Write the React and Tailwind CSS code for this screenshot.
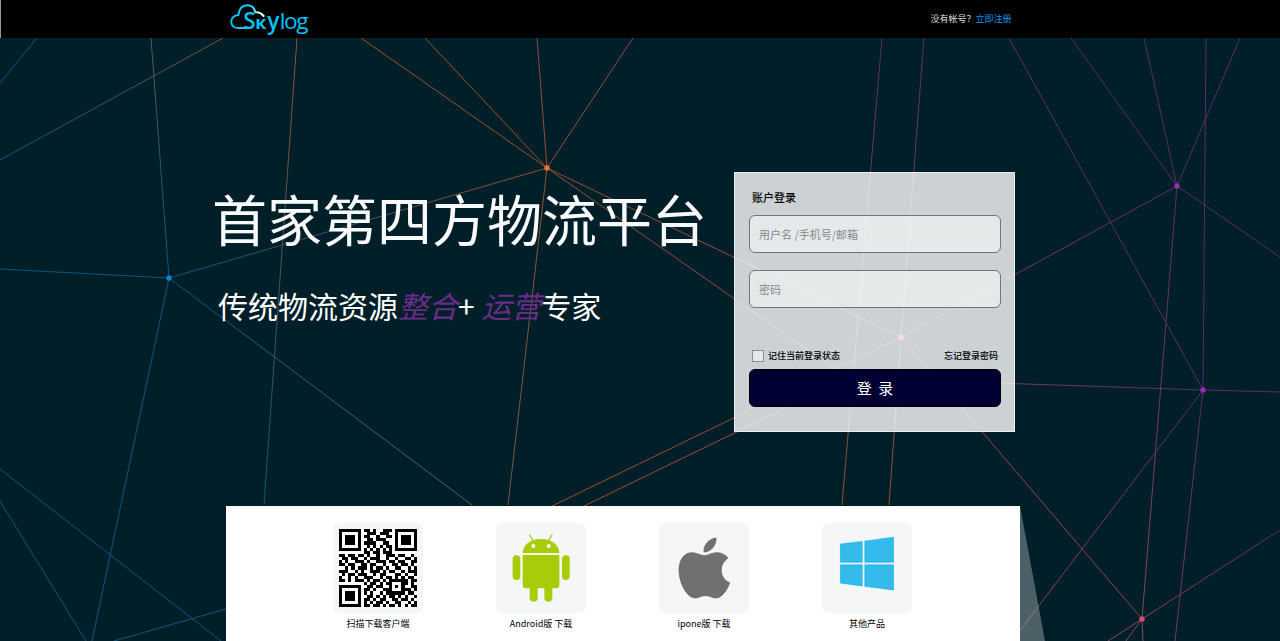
import React, { useState } from 'react'

const BLUE = '#0a5480'
const ORANGE = '#94502e'
const PURPLE = '#572c6a'
const RED = '#8a4355'

// x1, y1, color1, x2, y2, color2
const LINES = [
  [37, 38, BLUE, 0, 83, BLUE],
  [223, 38, '#7a5444', 0, 160, BLUE],
  [151, 38, '#5e5650', 169, 278, BLUE],
  [297, 38, ORANGE, 264, 505, BLUE],
  [169, 278, BLUE, 0, 269, BLUE],
  [169, 278, BLUE, 92, 641, BLUE],
  [169, 278, BLUE, 472, 505, '#5e5f60'],
  [169, 278, BLUE, 547, 168, ORANGE],
  [547, 168, ORANGE, 361, 38, ORANGE],
  [547, 168, ORANGE, 425, 38, ORANGE],
  [547, 168, ORANGE, 537, 38, RED],
  [547, 168, ORANGE, 633, 38, RED],
  [547, 168, ORANGE, 508, 505, '#6e5a48'],
  [547, 168, ORANGE, 901, 337, RED],
  [547, 168, ORANGE, 848, 378, RED],
  [552, 506, ORANGE, 901, 337, RED],
  [584, 506, ORANGE, 848, 378, RED],
  [848, 378, RED, 1203, 390, PURPLE],
  [882, 38, PURPLE, 842, 505, ORANGE],
  [924, 38, PURPLE, 901, 337, RED],
  [901, 337, RED, 889, 505, ORANGE],
  [901, 337, RED, 1142, 619, RED],
  [901, 337, RED, 1177, 186, PURPLE],
  [1177, 186, PURPLE, 1071, 38, PURPLE],
  [1177, 186, PURPLE, 1144, 38, PURPLE],
  [1177, 186, PURPLE, 1240, 38, PURPLE],
  [1177, 186, PURPLE, 1280, 257, PURPLE],
  [1177, 186, PURPLE, 1142, 619, RED],
  [1203, 390, PURPLE, 1009, 38, PURPLE],
  [1203, 390, PURPLE, 1206, 38, PURPLE],
  [1203, 390, PURPLE, 1280, 392, PURPLE],
  [1203, 390, PURPLE, 1175, 641, '#75385e'],
  [1203, 390, PURPLE, 1012, 641, RED],
  [1142, 619, RED, 1280, 530, PURPLE],
  [1142, 619, RED, 1108, 641, RED],
  [1142, 619, RED, 1126, 641, RED],
  [1142, 619, RED, 1143, 641, RED],
  [0, 469, BLUE, 221, 641, BLUE],
  [0, 501, BLUE, 86, 641, BLUE],
  [114, 641, BLUE, 226, 609, BLUE],
]

const NODES = [
  [169, 278, '#0a84d0'],
  [547, 168, '#f0703a'],
  [901, 337, '#e0507c'],
  [1177, 186, '#9430a8'],
  [1203, 390, '#9430a8'],
  [1142, 619, '#d84a78'],
]

const QR_ROWS = [
  '1111111011010011101111111',
  '1000001001110111001000001',
  '1011101011001001101011101',
  '1011101001101110001011101',
  '1011101011110011001011101',
  '1000001001010101101000001',
  '1111111010101010101111111',
  '0000000011011011100000000',
  '1101101101001001110110010',
  '0110110010111001001001101',
  '1010011101001110110110011',
  '1101100110110010011011010',
  '0010101110101101001100101',
  '1110010100111010110010111',
  '0101101110010110001101001',
  '1001010011100101101010110',
  '1101011101011010111111011',
  '0000000010110101100011010',
  '1111111001101100101010011',
  '1000001011010011100011101',
  '1011101010100101111110110',
  '1011101001101010110101001',
  '1011101011010110011011010',
  '1000001010101101001100101',
  '1111111011011010110101011',
]

const Backdrop = () => (
  <svg className="absolute inset-0 h-full w-full" viewBox="0 0 1280 641" preserveAspectRatio="xMidYMin slice" aria-hidden="true">
    <defs>
      {LINES.map(([x1, y1, c1, x2, y2, c2], i) => (
        <linearGradient key={i} id={`line${i}`} gradientUnits="userSpaceOnUse" x1={x1} y1={y1} x2={x2} y2={y2}>
          <stop offset="0" stopColor={c1} />
          <stop offset="1" stopColor={c2} />
        </linearGradient>
      ))}
    </defs>
    {LINES.map(([x1, y1, , x2, y2], i) => (
      <line key={i} x1={x1} y1={y1} x2={x2} y2={y2} stroke={`url(#line${i})`} strokeWidth="1" />
    ))}
    {NODES.map(([x, y, c]) => <circle key={x} cx={x} cy={y} r="2.7" fill={c} />)}
  </svg>
)

const Logo = () => (
  <svg className="h-[38px] w-[90px]" viewBox="18 0 270 114" role="img" aria-label="Skylog">
    <defs>
      <linearGradient id="cloud" gradientUnits="userSpaceOnUse" x1="30" y1="0" x2="130" y2="0">
        <stop offset="0" stopColor="#00bff5" />
        <stop offset="0.6" stopColor="#20d0f8" />
        <stop offset="0.95" stopColor="#ffffff" />
      </linearGradient>
    </defs>
    <path d="M78 84H50C38 84 30 76 31 64C32 52 42 46 52 45C54 28 62 17 78 16C92 15 100 24 103 37C113 35 121 40 128 48" fill="none" stroke="url(#cloud)" strokeWidth="6" strokeLinecap="round" />
    <text y="86" fill="#00c4f6" fontFamily="'Open Sans', sans-serif" fontSize="68">
      <tspan x="67" fontWeight="600">S</tspan>
      <tspan x="103" fontSize="54" fontWeight="700">к</tspan>
      <tspan x="139" fontWeight="600">y</tspan>
      <tspan x="176">l</tspan>
      <tspan x="189">o</tspan>
      <tspan x="226">g</tspan>
    </text>
  </svg>
)

const QrCode = () => (
  <svg className="h-full w-full p-[6px]" viewBox="0 0 25 25" shapeRendering="crispEdges" aria-hidden="true">
    <rect width="25" height="25" fill="#fff" />
    {QR_ROWS.map((row, y) => [...row].map((v, x) => v === '1' && <rect key={`${x}-${y}`} x={x} y={y} width="1" height="1" />))}
  </svg>
)

const Android = () => (
  <svg className="h-full w-full" viewBox="19 24 270 270" fill="#a9cc08" aria-hidden="true">
    <path d="M99 114C100 89 122 72 154 72C186 72 208 89 209 114Z" />
    <path d="M120 60L131 77M187 60L176 77" stroke="#a9cc08" strokeWidth="4" strokeLinecap="round" />
    <circle cx="131" cy="93" r="6" fill="#fff" />
    <circle cx="177" cy="93" r="6" fill="#fff" />
    <path d="M99 120H209V209Q209 220 198 220H110Q99 220 99 209Z" />
    <rect x="69" y="121" width="23" height="74" rx="11" />
    <rect x="217" y="121" width="23" height="74" rx="11" />
    <rect x="120" y="200" width="24" height="60" rx="12" />
    <rect x="164" y="200" width="24" height="60" rx="12" />
  </svg>
)

const Apple = () => (
  <svg className="h-full w-full" viewBox="30 24 270 270" fill="#707070" stroke="#5e5e5e" strokeWidth="2" aria-hidden="true">
    <path d="M165 122C151 120 141 112 126 113C102 115 90 138 90 165C90 205 115 249 138 249C149 249 155 242 169 242C183 242 190 249 201 249C220 249 236 222 242 203C227 197 217 184 217 165C217 149 225 138 237 129C228 117 215 113 203 113C188 113 178 121 165 122Z" />
    <path d="M165 111C163 90 179 72 201 69C203 89 187 111 165 111Z" />
  </svg>
)

const Windows = () => (
  <svg className="h-full w-full" viewBox="33 69 273 273" fill="#35bbeb" stroke="#0fb0ea" strokeWidth="2" aria-hidden="true">
    <path d="M89 133L155 125V188H89Z" />
    <path d="M163 124L250 112V188H163Z" />
    <path d="M89 196H155V260L89 251Z" />
    <path d="M163 196H250V272L163 261Z" />
  </svg>
)

const DOWNLOADS = [
  { label: '扫描下载客户端', Icon: QrCode },
  { label: 'Android版 下载', Icon: Android },
  { label: 'ipone版 下载', Icon: Apple },
  { label: '其他产品', Icon: Windows },
]

const field = 'block h-[38px] w-full rounded-md border border-[#6f7779] bg-white/50 px-[9px] text-[11px] text-gray-800 placeholder:text-[#858a8c] focus:outline-none focus:ring-1 focus:ring-sky-600'

const LoginCard = () => {
  const [form, setForm] = useState({ user: '', password: '', remember: false })

  return (
    <form onSubmit={e => e.preventDefault()} className="mt-[134px] w-[281px] shrink-0 border border-white/60 bg-white/80 pt-4 pr-[13px] pb-6 pl-[14px] text-black">
      <h2 className="pl-[3px] text-[11px] leading-4 font-medium">账户登录</h2>
      <input aria-label="用户名" value={form.user} onChange={e => setForm({ ...form, user: e.target.value })} placeholder="用户名 /手机号/邮箱" className={`${field} mt-[10px]`} />
      <input aria-label="密码" type="password" value={form.password} onChange={e => setForm({ ...form, password: e.target.value })} placeholder="密码" className={`${field} mt-[17px]`} />
      <div className="mt-10 flex items-center justify-between px-[3px] text-[9px] leading-4 font-medium">
        <label className="flex items-center gap-1">
          <input type="checkbox" checked={form.remember} onChange={e => setForm({ ...form, remember: e.target.checked })} className="size-3 appearance-none border border-[#8b9193] bg-white/50 checked:bg-[#000033]" />
          记住当前登录状态
        </label>
        <a href="#forgot">忘记登录密码</a>
      </div>
      <button type="submit" className="mt-[5px] h-[38px] w-full rounded-md border border-black bg-[#000033] text-[15px] text-white">登&nbsp;&nbsp;录</button>
    </form>
  )
}

const App = () => (
  <div className="relative flex min-h-screen flex-col overflow-hidden bg-[#011f28] font-['Noto_Sans_CJK_SC',sans-serif]">
    <Backdrop />

    <header className="relative border-l border-white/60 bg-black">
      <div className="mx-auto flex max-w-[828px] items-center justify-between pr-[43px]">
        <Logo />
        <p className="text-[9px] leading-4 text-[#dddddd]">没有帐号？<a href="#register" className="text-[#0a96ee]">立即注册</a></p>
      </div>
    </header>

    <main className="relative flex grow flex-col">
      <section className="mx-auto flex w-full max-w-[856px] justify-between pr-[53px] pb-[74px]">
        <div className="pt-[147px] whitespace-nowrap text-[#f8f9fa]">
          <h1 className="text-[55px] leading-16">首家第四方物流平台</h1>
          <p className="mt-9 pl-[6px] text-[30px] leading-10 text-white">
            传统物流资源<em className="text-[#692c88]">整合</em>+ <em className="text-[#692c88]">运营</em>专家
          </p>
        </div>
        <LoginCard />
      </section>

      <section className="mx-auto flex w-full max-w-[828px] grow">
        <ul className="flex w-[794px] gap-[73px] bg-white pt-[17px] pl-[107px] text-black">
          {DOWNLOADS.map(({ label, Icon }) => (
            <li key={label} className="w-[90px]">
              <a href="#download" className="block text-center text-[9px] leading-4 whitespace-nowrap">
                <span className="mb-[3px] block h-[90px] overflow-hidden rounded-md bg-[#f5f7f7]"><Icon /></span>
                {label}
              </a>
            </li>
          ))}
        </ul>
        <div className="relative w-[25px]">
          <svg className="absolute inset-0 h-full w-full" viewBox="0 0 25 135" preserveAspectRatio="none" aria-hidden="true">
            <path d="M0 0L25 135H0Z" fill="#a6b2b4" fillOpacity="0.45" />
          </svg>
        </div>
      </section>
    </main>
  </div>
)

export default App
